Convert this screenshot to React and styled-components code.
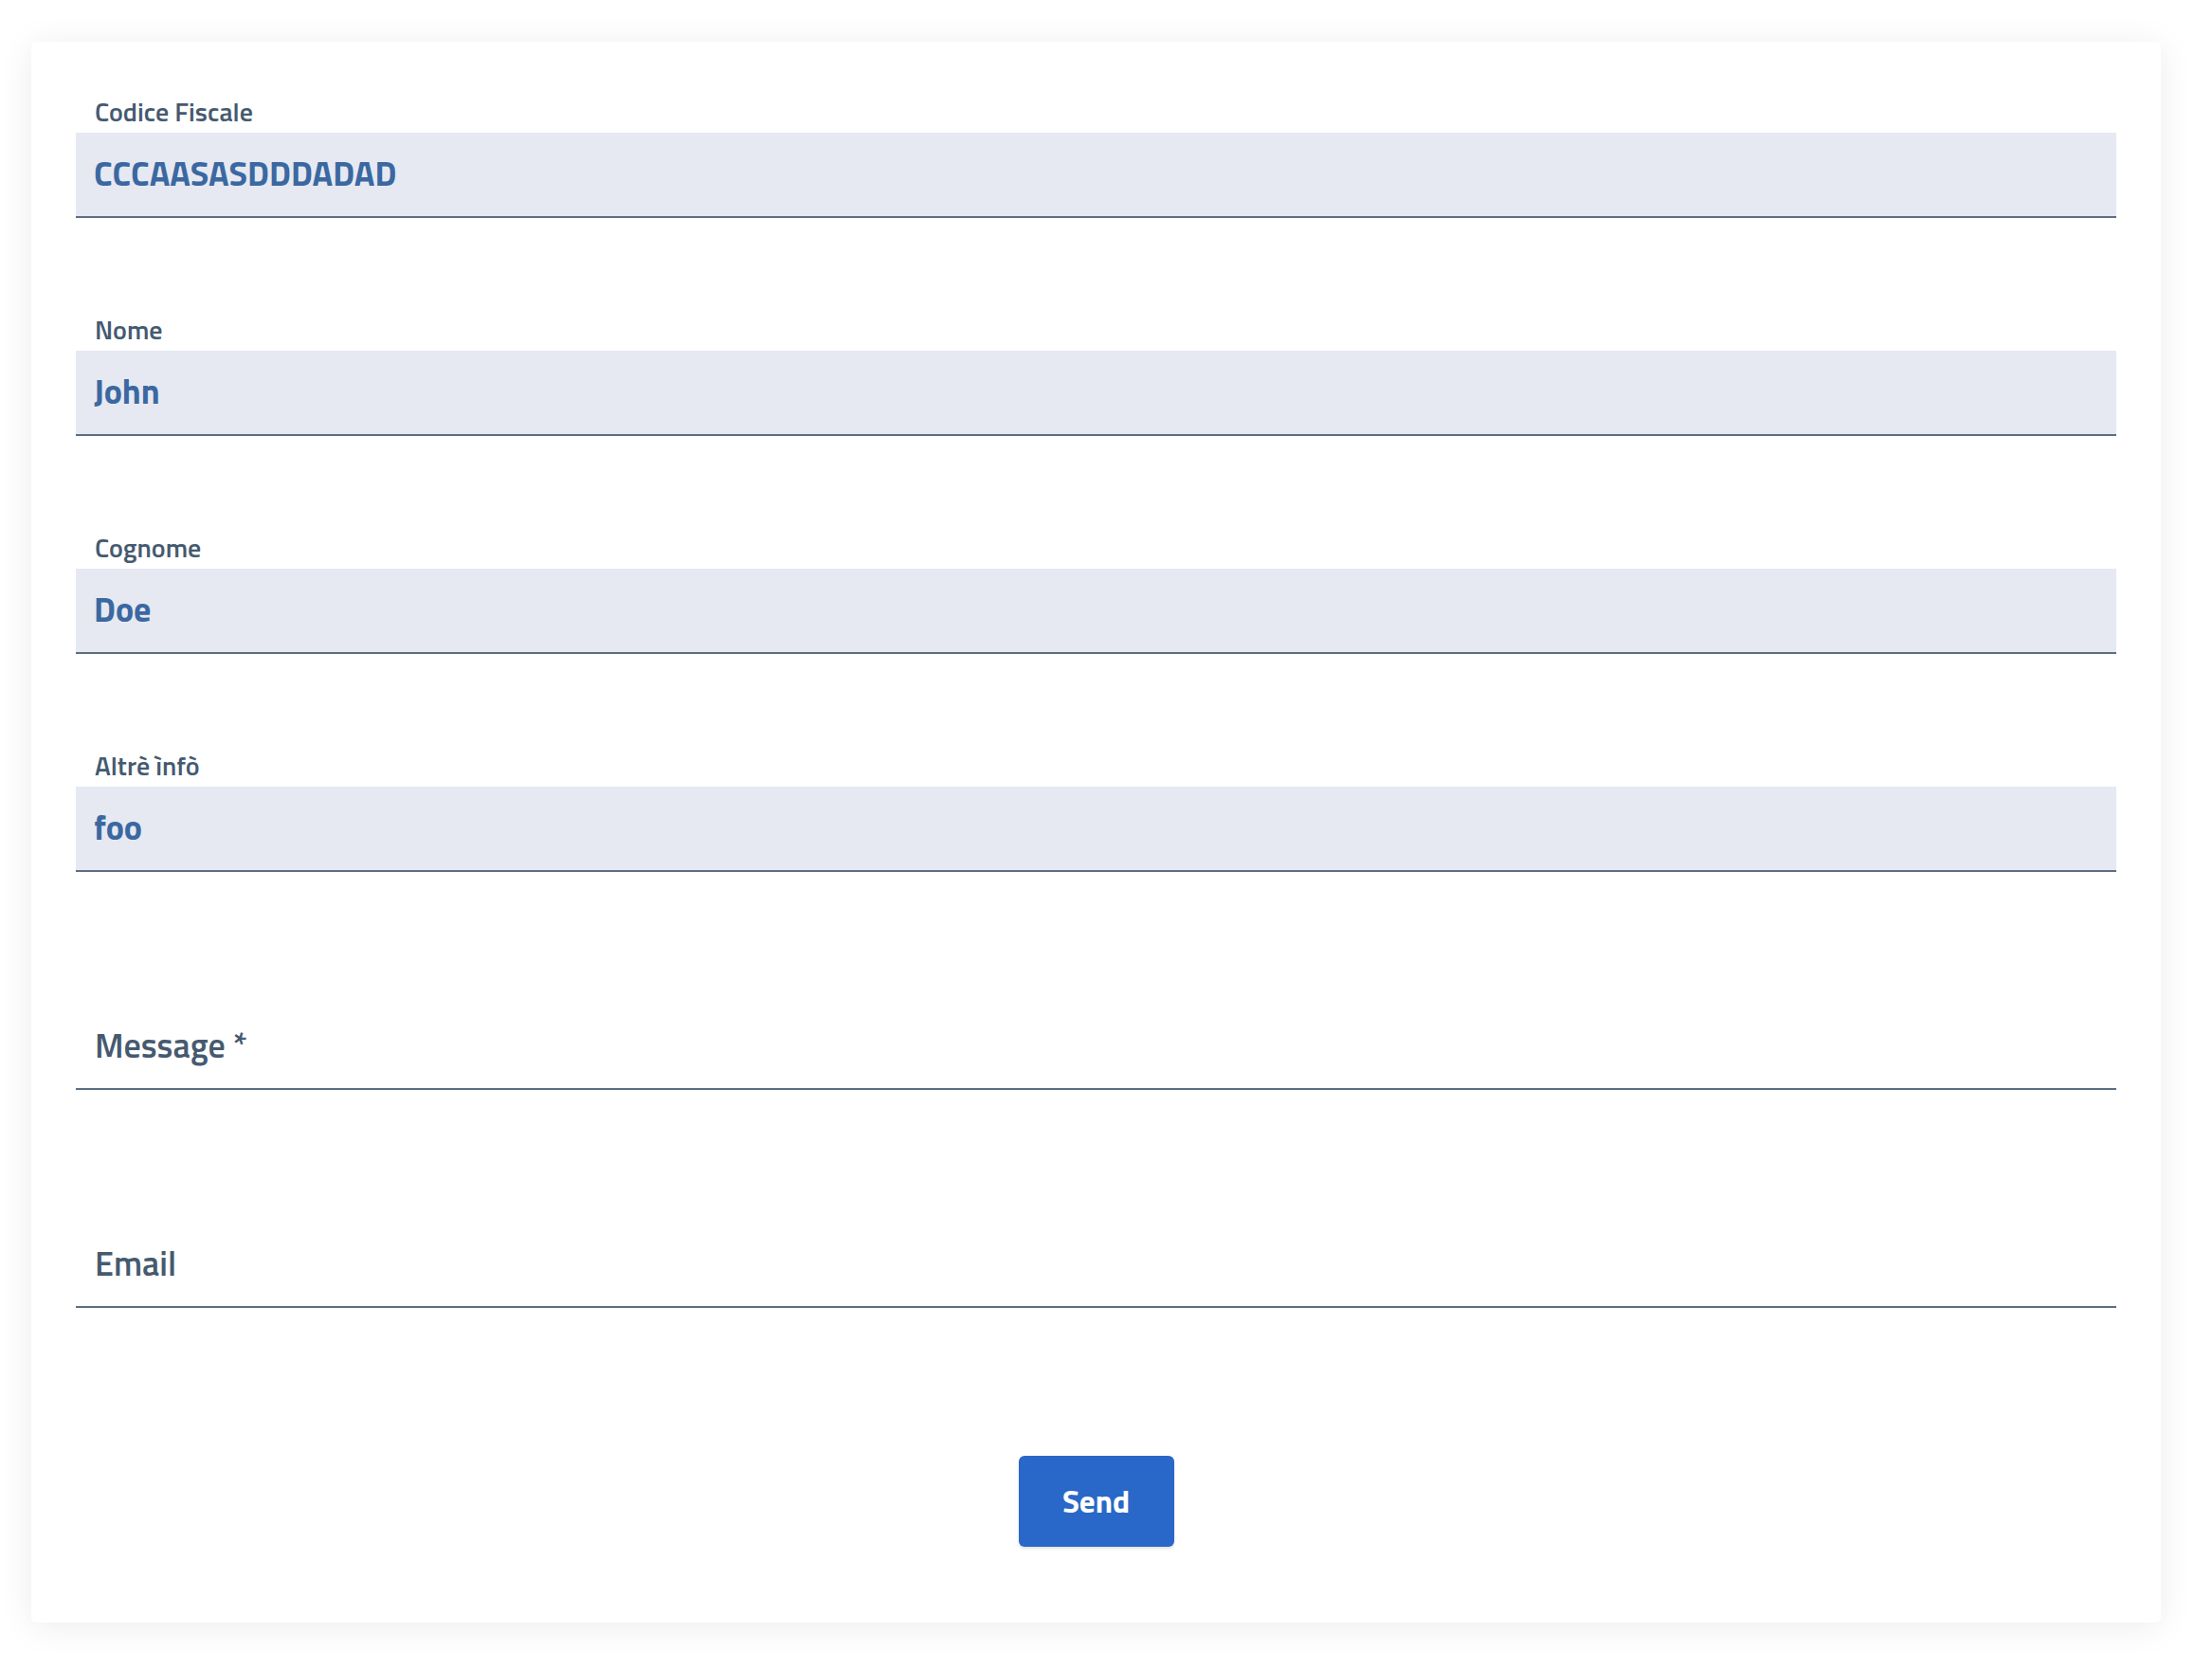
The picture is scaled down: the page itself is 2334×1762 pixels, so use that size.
import React from 'react'
import styled, { createGlobalStyle } from 'styled-components'

const GlobalStyle = createGlobalStyle`
  body {
    margin: 0;
    background: #ffffff;
    font-family: "Titillium Web", Lato, "Liberation Sans", sans-serif;
  }
`

const Page = styled.div`
  padding: 44px 54px 50px 33px;
`

const Card = styled.form`
  background: #ffffff;
  border-radius: 6px;
  box-shadow: 0 4px 36px rgba(0, 0, 0, 0.08);
  padding: 56px 47px 80px 47px;
  display: flex;
  flex-direction: column;
  gap: 100px;
`

const Field = styled.div`
  position: relative;
  display: flex;
  flex-direction: column;
  padding-top: 40px;
`

const Label = styled.label`
  position: absolute;
  left: 20px;
  font-weight: 600;
  color: #455a70;
  white-space: nowrap;
  ${p => p.$floating ? `
    top: 40px;
    height: 85px;
    display: flex;
    align-items: center;
    font-size: 36px;
  ` : `
    top: 0;
    line-height: 36px;
    font-size: 28px;
  `}
`

const Input = styled.input`
  box-sizing: border-box;
  height: 90px;
  width: 100%;
  border: none;
  border-bottom: 2px solid #5c6f82;
  border-radius: 0;
  padding: 0 20px 3px 19px;
  background: ${p => p.$filled ? '#e6e9f2' : 'transparent'};
  font-family: inherit;
  font-size: 36px;
  font-weight: 700;
  color: #3b68a1;
  outline: none;
`

const Actions = styled.div`
  display: flex;
  justify-content: center;
  padding-top: 56px;
`

const Button = styled.button`
  width: 164px;
  height: 96px;
  border: none;
  border-radius: 6px;
  background: #2968c8;
  box-shadow: 0 2px 3px rgba(0, 0, 0, 0.12);
  color: #ffffff;
  font-family: inherit;
  font-size: 33px;
  font-weight: 700;
  cursor: pointer;
`

const fields = [
  { id: 'cf', label: 'Codice Fiscale', value: 'CCCAASASDDDADAD' },
  { id: 'nome', label: 'Nome', value: 'John' },
  { id: 'cognome', label: 'Cognome', value: 'Doe' },
  { id: 'altre', label: 'Altrè ìnfò', value: 'foo' },
  { id: 'message', label: 'Message *', value: '' },
  { id: 'email', label: 'Email', value: '' },
]

export default function App() {
  return (
    <Page>
      <GlobalStyle />
      <Card onSubmit={e => e.preventDefault()}>
        {fields.map(f => (
          <Field key={f.id}>
            <Label htmlFor={f.id} $floating={!f.value}>{f.label}</Label>
            <Input id={f.id} defaultValue={f.value} $filled={!!f.value} />
          </Field>
        ))}
        <Actions>
          <Button type="submit">Send</Button>
        </Actions>
      </Card>
    </Page>
  )
}
